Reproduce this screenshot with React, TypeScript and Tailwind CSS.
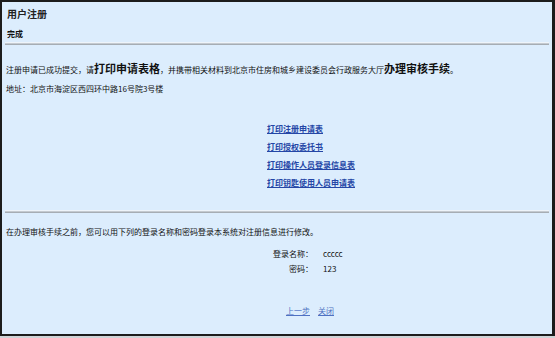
export default function App() {
  return (
    <div className="h-[338px] w-[555px] bg-[#cfd3d6] [font-family:'Noto_Sans_CJK_SC',sans-serif] text-[#111]">
      <div className="flex h-[336px] flex-col border-2 border-r-[3px] border-[#1c1c1c] bg-[#dcedfd]">
        {/* Header */}
        <div className="pl-[5px] text-[10px] font-semibold leading-[24px] text-[#222]">用户注册</div>
        <div className="pl-[5px] text-[8px] font-bold leading-[16px]">完成</div>
        <Divider />

        {/* Submit notice */}
        <p className="mt-[15px] pl-[4px] text-[8px] leading-[16px] whitespace-nowrap">
          注册申请已成功提交，请
          <span className="text-[11px] font-bold">打印申请表格</span>
          ，并携带相关材料到北京市住房和城乡建设委员会行政服务大厅
          <span className="text-[11px] font-bold">办理审核手续</span>。
        </p>
        <p className="mt-[3px] pl-[4px] text-[8px] leading-[16px]">地址：北京市海淀区西四环中路16号院3号楼</p>

        {/* Print links */}
        <div className="mt-[23px] ml-[265px] flex flex-col">
          <PrintLink text="打印注册申请表" />
          <PrintLink text="打印授权委托书" />
          <PrintLink text="打印操作人员登录信息表" />
          <PrintLink text="打印钥匙使用人员申请表" />
        </div>

        <div className="mt-[18px]">
          <Divider />
        </div>

        {/* Login info */}
        <p className="mt-[11px] pl-[4px] text-[8px] leading-[16px]">
          在办理审核手续之前，您可以用下列的登录名称和密码登录本系统对注册信息进行修改。
        </p>
        <div className="mt-[6px] ml-[231px] grid grid-cols-[80px_auto] gap-x-[10px] text-[8px] leading-[15px]">
          <span className="text-right">登录名称：</span>
          <span>ccccc</span>
          <span className="text-right">密码：</span>
          <span>123</span>
        </div>

        {/* Actions */}
        <div className="mt-[27px] ml-[284px] flex gap-[8px] text-[8px] leading-[16px] text-[#4f71c2]">
          <a href="#" className="underline">上一步</a>
          <a href="#" className="underline">关闭</a>
        </div>
      </div>
    </div>
  );
}

function Divider() {
  return <div className="mx-[3px] h-[3px] border-t border-b border-t-[#eef4fa] border-b-[#a6adb4] bg-[#c4cad0]" />;
}

function PrintLink({ text }: { text: string }) {
  return (
    <a href="#" className="text-[8px] font-semibold leading-[18px] text-[#2446a6] underline">
      {text}
    </a>
  );
}
